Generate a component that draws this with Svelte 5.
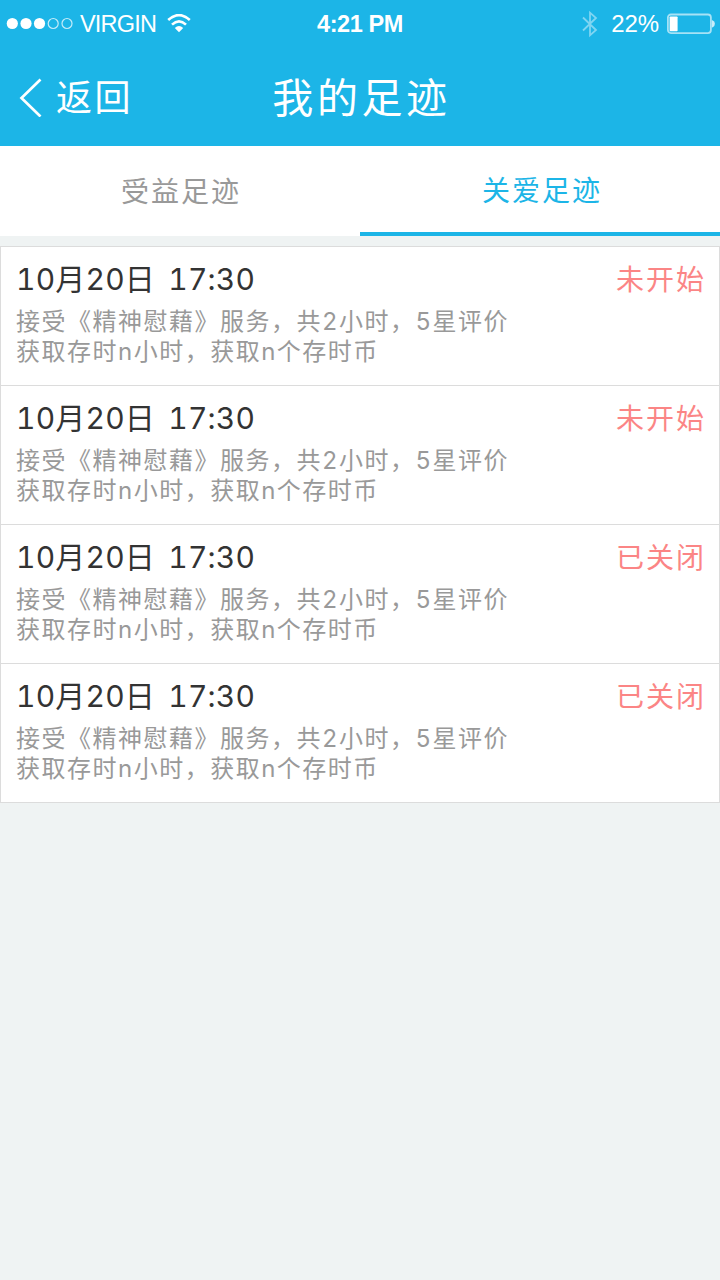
<script lang="ts">
  type Footprint = {
    id: number;
    date: string;
    status: string;
    service: string;
    reward: string;
  };

  const tabs = ['受益足迹', '关爱足迹'];
  let activeTab = $state(1);

  const service = '接受《精神慰藉》服务，共2小时，5星评价';
  const reward = '获取存时n小时，获取n个存时币';
  const date = '10月20日 17:30';

  const footprints: Footprint[] = [
    { id: 1, date, status: '未开始', service, reward },
    { id: 2, date, status: '未开始', service, reward },
    { id: 3, date, status: '已关闭', service, reward },
    { id: 4, date, status: '已关闭', service, reward }
  ];
</script>

<div class="page">
  <header>
    <div class="status-bar">
      <div class="carrier">
        <svg width="68" height="14" viewBox="0 0 68 14">
          <g fill="#fff">
            <circle cx="6.3" cy="6.5" r="5.6" />
            <circle cx="20" cy="6.5" r="5.6" />
            <circle cx="33.5" cy="6.5" r="5.6" />
          </g>
          <g fill="none" stroke="#c4ebf9" stroke-width="1.2">
            <circle cx="47.2" cy="6.5" r="5" />
            <circle cx="61" cy="6.5" r="5" />
          </g>
        </svg>
        <span class="carrier-name">VIRGIN</span>
        <svg class="wifi" width="24" height="20" viewBox="0 0 24 20">
          <g fill="none" stroke="#fff" stroke-width="2.6">
            <path d="M1.2 6 Q12 -3.8 22.8 6" />
            <path d="M5 10.6 Q12 4 19 10.6" />
          </g>
          <path d="M7.8 14 Q12 9.8 16.2 14 L12 18.2 Z" fill="#fff" />
        </svg>
      </div>
      <span class="time">4:21 PM</span>
      <div class="battery">
        <svg width="16" height="28" viewBox="0 0 16 28">
          <path
            d="M1 7.5 L14 20 L8 25.3 V2.7 L14 8 L1 20.5"
            fill="none"
            stroke="#7fd5f2"
            stroke-width="1.8"
          />
        </svg>
        <span class="percent">22%</span>
        <svg width="50" height="22" viewBox="0 0 50 22">
          <rect x="1.9" y="1.5" width="43" height="18.6" rx="3" fill="none" stroke="#a6e2f6" stroke-width="1.8" />
          <rect x="3.6" y="3.4" width="8" height="14.8" rx="0.8" fill="#fff" />
          <path d="M45.8 7.2 H46.4 Q48.9 7.8 48.9 10.8 T46.4 14.4 H45.8 Z" fill="#c8edfa" />
        </svg>
      </div>
    </div>
    <div class="nav-bar">
      <button class="back">
        <svg width="24" height="40" viewBox="0 0 24 40">
          <path d="M21.5 2.5 L2.5 21 L21.5 39.5" fill="none" stroke="#fff" stroke-width="2.7" />
        </svg>
        <span>返回</span>
      </button>
      <h1>我的足迹</h1>
    </div>
  </header>

  <nav class="tabs">
    {#each tabs as tab, i}
      <button class="tab" class:active={activeTab === i} onclick={() => (activeTab = i)}>{tab}</button>
    {/each}
  </nav>

  <ul class="list">
    {#each footprints as item (item.id)}
      <li class="item">
        <div class="item-head">
          <span class="date">{item.date}</span>
          <span class="status">{item.status}</span>
        </div>
        <p>{item.service}</p>
        <p>{item.reward}</p>
      </li>
    {/each}
  </ul>
</div>

<style>
  :global(body) {
    margin: 0;
    background: #eff3f3;
  }

  .page {
    min-height: 1280px;
    background: #eff3f3;
    font-family: 'Liberation Sans', 'Noto Sans CJK SC', sans-serif;
  }

  svg {
    display: block;
    flex: none;
  }

  button {
    margin: 0;
    padding: 0;
    border: none;
    background: none;
    font-family: inherit;
    cursor: pointer;
  }

  header {
    height: 146px;
    background: #1cb5e7;
    color: #fff;
  }

  .status-bar {
    display: grid;
    grid-template-columns: 1fr auto 1fr;
    align-items: center;
    height: 48px;
    padding: 0 4px 0 6px;
    font-size: 24px;
    line-height: 48px;
  }

  .carrier,
  .battery {
    display: flex;
    align-items: center;
  }

  .carrier-name {
    width: 76px;
    margin: 0 11px 0 6px;
    font-size: 23.5px;
    letter-spacing: -0.8px;
  }

  .time {
    margin-right: 2px;
    font-weight: bold;
    font-size: 23.5px;
    letter-spacing: -0.4px;
  }

  .battery {
    justify-content: flex-end;
  }

  .percent {
    margin: 0 7px 0 13px;
    font-size: 24px;
    letter-spacing: -0.1px;
  }

  .nav-bar {
    display: grid;
    grid-template-columns: 1fr auto 1fr;
    align-items: center;
    height: 98px;
    padding: 0 16px 0 19px;
  }

  .back {
    display: flex;
    align-items: center;
    gap: 13px;
    color: #fff;
    font-size: 36px;
    letter-spacing: 2.5px;
  }

  .back span {
    padding-bottom: 4px;
  }

  h1 {
    margin: 0;
    padding-bottom: 4px;
    font-size: 41px;
    font-weight: 400;
    letter-spacing: 3.6px;
  }

  .tabs {
    display: grid;
    grid-template-columns: 50% 50%;
    height: 90px;
    background: #fff;
  }

  .tab {
    padding: 2px 0 0 2px;
    border-bottom: 4px solid transparent;
    color: #999;
    font-size: 28px;
    letter-spacing: 2px;
  }

  .tab.active {
    padding: 0 0 0 4px;
    border-bottom-color: #1cb5e7;
    color: #1cb5e7;
  }

  .list {
    margin: 10px 0 0;
    padding: 0;
    border: 1px solid #dcdcdc;
    background: #fff;
    font-family: Inter, 'Noto Sans CJK SC', sans-serif;
    font-variant-numeric: tabular-nums;
    list-style: none;
  }

  .item {
    box-sizing: border-box;
    height: 139px;
    padding: 11px 13px 0 15px;
    border-bottom: 1px solid #dcdcdc;
  }

  .item:last-child {
    height: 138px;
    border-bottom: none;
  }

  .item-head {
    display: flex;
    justify-content: space-between;
    height: 49px;
    line-height: 44px;
  }

  .date {
    color: #333;
    font-size: 30px;
    line-height: 42px;
    letter-spacing: 0.2px;
    word-spacing: 5px;
  }

  .status {
    color: #fb8585;
    font-size: 28px;
    letter-spacing: 2px;
  }

  p {
    margin: 0;
    color: #999;
    font-size: 24px;
    line-height: 30px;
    letter-spacing: 1.5px;
  }
</style>
